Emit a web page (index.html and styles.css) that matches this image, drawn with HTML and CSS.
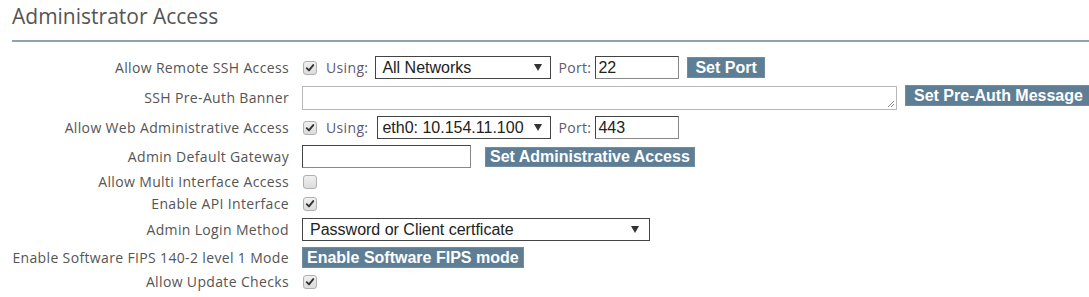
FILE: index.html
```html
<!DOCTYPE html>
<html>
<head>
<meta charset="utf-8">
<title>Administrator Access</title>
<link rel="stylesheet" href="styles.css">
</head>
<body>
<div class="page">
  <div class="header"><h1 class="title">Administrator Access</h1></div>
  <div class="form">
    <div class="row">
      <div class="label">Allow Remote SSH Access</div>
      <div class="controls">
        <span class="cb checked"><svg viewBox="0 0 14 14" width="14" height="14"><path d="M3.2 7.2 L5.8 9.8 L10.8 3.6" fill="none" stroke="#333" stroke-width="2.2" stroke-linecap="round" stroke-linejoin="round"/></svg></span>
        <span class="txt using">Using:</span>
        <div class="select sel-net"><span>All Networks</span><svg class="arrow" viewBox="0 0 8 7" width="8" height="7"><path d="M0 0 H8 L4 7 Z" fill="#333"/></svg></div>
        <span class="txt port">Port:</span>
        <div class="input port-in">22</div>
        <button class="btn setport">Set Port</button>
      </div>
    </div>
    <div class="row">
      <div class="label">SSH Pre-Auth Banner</div>
      <div class="controls">
        <div class="textarea"><svg class="grip" viewBox="0 0 9 9" width="9" height="9"><path d="M8 2 L2 8 M8 5 L5 8" stroke="#888" stroke-width="1" fill="none"/></svg></div>
        <button class="btn preauth">Set Pre-Auth Message</button>
      </div>
    </div>
    <div class="row">
      <div class="label">Allow Web Administrative Access</div>
      <div class="controls">
        <span class="cb checked"><svg viewBox="0 0 14 14" width="14" height="14"><path d="M3.2 7.2 L5.8 9.8 L10.8 3.6" fill="none" stroke="#333" stroke-width="2.2" stroke-linecap="round" stroke-linejoin="round"/></svg></span>
        <span class="txt using">Using:</span>
        <div class="select sel-eth"><span>eth0: 10.154.11.100</span><svg class="arrow" viewBox="0 0 8 7" width="8" height="7"><path d="M0 0 H8 L4 7 Z" fill="#333"/></svg></div>
        <span class="txt port">Port:</span>
        <div class="input port-in">443</div>
      </div>
    </div>
    <div class="row">
      <div class="label">Admin Default Gateway</div>
      <div class="controls">
        <div class="input gw-in"></div>
        <button class="btn setadmin">Set Administrative Access</button>
      </div>
    </div>
    <div class="row">
      <div class="label">Allow Multi Interface Access</div>
      <div class="controls"><span class="cb"></span></div>
    </div>
    <div class="row">
      <div class="label">Enable API Interface</div>
      <div class="controls"><span class="cb checked"><svg viewBox="0 0 14 14" width="14" height="14"><path d="M3.2 7.2 L5.8 9.8 L10.8 3.6" fill="none" stroke="#333" stroke-width="2.2" stroke-linecap="round" stroke-linejoin="round"/></svg></span></div>
    </div>
    <div class="row">
      <div class="label">Admin Login Method</div>
      <div class="controls">
        <div class="select sel-login"><span>Password or Client certficate</span><svg class="arrow" viewBox="0 0 8 7" width="8" height="7"><path d="M0 0 H8 L4 7 Z" fill="#333"/></svg></div>
      </div>
    </div>
    <div class="row">
      <div class="label">Enable Software FIPS 140-2 level 1 Mode</div>
      <div class="controls"><button class="btn fips">Enable Software FIPS mode</button></div>
    </div>
    <div class="row">
      <div class="label">Allow Update Checks</div>
      <div class="controls"><span class="cb checked"><svg viewBox="0 0 14 14" width="14" height="14"><path d="M3.2 7.2 L5.8 9.8 L10.8 3.6" fill="none" stroke="#333" stroke-width="2.2" stroke-linecap="round" stroke-linejoin="round"/></svg></span></div>
    </div>
  </div>
</div>
</body>
</html>
```

FILE: styles.css
```css
html, body {
  margin: 0;
  padding: 0;
  background: #ffffff;
}
.page {
  padding-left: 12px;
  font-family: "Open Sans", "Noto Sans", sans-serif;
  color: #555555;
}
.header {
  padding-top: 2px;
  padding-bottom: 10px;
  border-bottom: 2px solid #8ea2b0;
}
.title {
  margin: 0;
  font-size: 21px;
  line-height: 28px;
  letter-spacing: 0;
  font-weight: normal;
  color: #555555;
}
.form {
  margin-top: 11px;
}
.row {
  display: flex;
  align-items: center;
  padding: 3px 0;
  min-height: 16px;
}
.label {
  width: 277px;
  flex: none;
  text-align: right;
  font-size: 14px;
  line-height: 16px;
  letter-spacing: 0.35px;
  white-space: nowrap;
}
.controls {
  display: flex;
  align-items: center;
  margin-left: 13px;
}
.cb {
  display: inline-flex;
  align-items: center;
  justify-content: center;
  box-sizing: border-box;
  width: 14px;
  height: 14px;
  margin-left: 1px;
  border: 1px solid #b0b0b0;
  border-radius: 3px;
  background: linear-gradient(#f0f0f0, #dcdcdc);
}
.cb svg {
  display: block;
}
.txt {
  font-size: 14px;
  line-height: 16px;
  letter-spacing: 0.35px;
  color: #5e5a6e;
}
.using {
  margin-left: 9px;
}
.port {
  margin-left: 7px;
}
.select {
  display: flex;
  align-items: center;
  justify-content: space-between;
  box-sizing: border-box;
  height: 23px;
  border: 1px solid #444;
  padding: 0 8px 0 6px;
  font-family: "Liberation Sans", Arial, sans-serif;
  font-size: 16px;
  color: #222;
  background: #fff;
  white-space: nowrap;
}
.sel-net {
  width: 176px;
  margin-left: 7px;
}
.sel-eth {
  width: 174px;
  margin-left: 9px;
  padding-left: 4px;
}
.sel-login {
  width: 348px;
  padding-left: 7px;
  padding-right: 10px;
}
.arrow {
  display: block;
  flex: none;
}
.input {
  box-sizing: border-box;
  height: 23px;
  border: 1px solid #444;
  border-right-color: #888;
  border-bottom-color: #888;
  padding: 0 2px;
  font-family: "Liberation Sans", Arial, sans-serif;
  font-size: 16px;
  line-height: 21px;
  color: #222;
  background: #fff;
}
.port-in {
  width: 84px;
  margin-left: 4px;
}
.gw-in {
  width: 169px;
}
.textarea {
  position: relative;
  box-sizing: border-box;
  width: 595px;
  height: 24px;
  border: 1px solid #b8b8b8;
  background: #fff;
}
.grip {
  position: absolute;
  right: 1px;
  bottom: 1px;
}
.btn {
  box-sizing: border-box;
  height: 21px;
  margin: 0;
  border: 1px solid #6f8ca0;
  padding: 0 7px;
  background: #5e7e95;
  color: #ffffff;
  font-family: "Liberation Sans", Arial, sans-serif;
  font-weight: bold;
  font-size: 16px;
  line-height: 19px;
  white-space: nowrap;
}
.setport {
  margin-left: 8px;
}
.preauth {
  margin-left: 8px;
  margin-bottom: 4px;
  padding: 0 8px;
}
.setadmin {
  margin-left: 14px;
  height: 20px;
  line-height: 18px;
  padding: 0 4px;
}
.fips {
  padding: 0 4px;
}
```
